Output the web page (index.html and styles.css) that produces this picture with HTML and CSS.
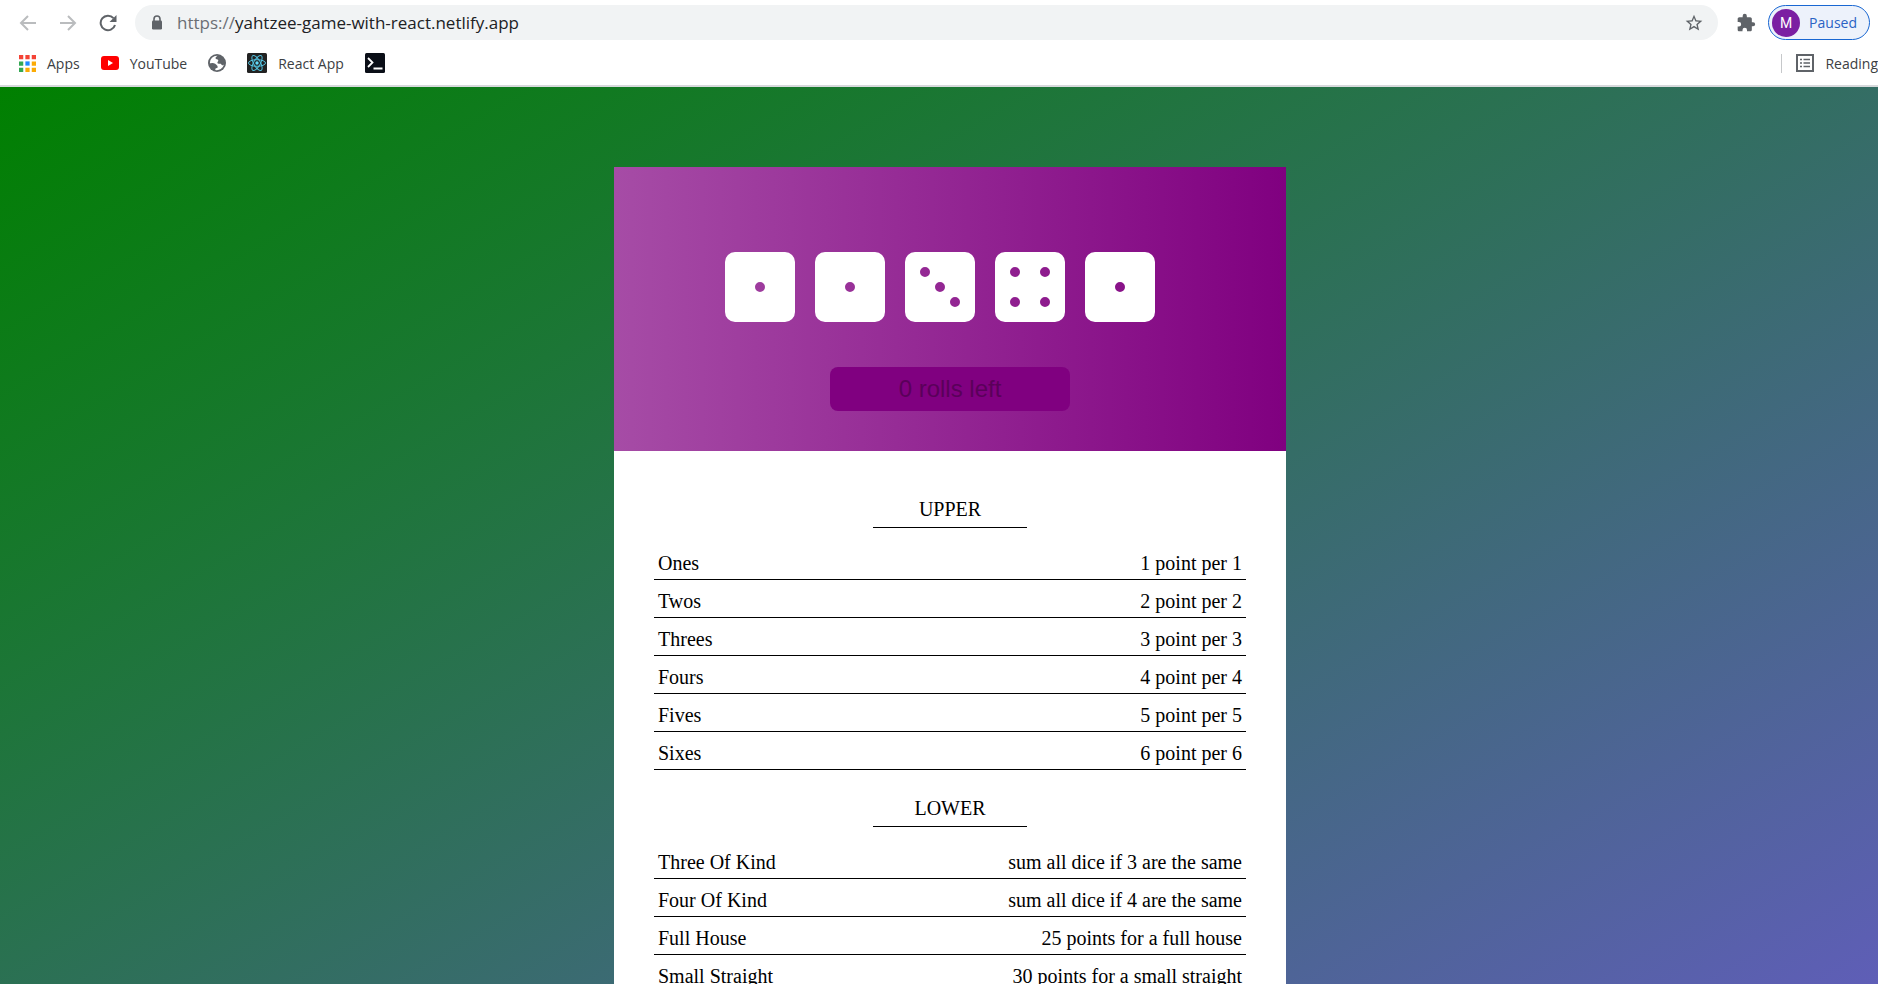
FILE: index.html
```html
<!DOCTYPE html>
<html lang="en">
<head>
<meta charset="utf-8">
<title>Yahtzee</title>
<link rel="stylesheet" href="styles.css">
</head>
<body>
<header class="browser">
  <div class="toolbar">
    <button class="nav-btn muted" aria-label="Back"><svg viewBox="0 0 18 18"><path d="M17 9H2M9 2 2 9l7 7"/></svg></button>
    <button class="nav-btn muted" aria-label="Forward"><svg viewBox="0 0 18 18"><path d="M1 9h15M9 2l7 7-7 7"/></svg></button>
    <button class="nav-btn" aria-label="Reload"><svg viewBox="0 0 18 18"><path d="M16 11A7.300 7.300 0 1 1 14.500 4.200"/><path class="solid" d="M17.500 1v7h-7z"/></svg></button>
    <div class="address">
      <svg class="lock" viewBox="0 0 12 15"><path d="M3 6V4a3 3 0 0 1 6 0v2" fill="none" stroke="#5f6368" stroke-width="1.600"/><rect x="1" y="5.500" width="10" height="9" rx="1.200" fill="#5f6368"/></svg>
      <a class="url" href="#"><span class="scheme">https://</span>yahtzee-game-with-react.netlify.app</a>
      <button class="star" aria-label="Bookmark this tab"><svg viewBox="0 0 24 24"><path d="M22 9.240l-7.190-.620L12 2 9.190 8.630 2 9.240l5.460 4.730L5.820 21 12 17.270 18.180 21l-1.630-7.030L22 9.240zM12 15.400l-3.760 2.270 1-4.280-3.320-2.880 4.380-.380L12 6.100l1.710 4.040 4.380.380-3.320 2.880 1 4.280L12 15.400z"/></svg></button>
    </div>
    <button class="ext" aria-label="Extensions"><svg viewBox="0 0 24 24"><path d="M20.500 11H19V7c0-1.100-.900-2-2-2h-4V3.500a2.500 2.500 0 0 0-5 0V5H4c-1.100 0-2 .900-2 2v3.800h1.500a2.700 2.700 0 0 1 0 5.400H2V20c0 1.100.900 2 2 2h3.800v-1.500a2.700 2.700 0 0 1 5.400 0V22H17c1.100 0 2-.900 2-2v-4h1.500a2.500 2.500 0 0 0 0-5z"/></svg></button>
    <button class="profile"><span class="avatar">M</span><span>Paused</span></button>
  </div>
  <nav class="bookmarks">
    <a href="#" class="mark"><svg class="apps" viewBox="0 0 16 16"><path fill="#f44336" d="M0 0h4v4H0zM6 0h4v4H6zM12 0h4v4h-4z"/><path fill="#34a853" d="M0 6h4v4H0zM0 12h4v4H0z"/><path fill="#1e88ff" d="M6 6h4v4H6z"/><path fill="#fbab05" d="M12 6h4v4h-4zM6 12h4v4H6zM12 12h4v4h-4z"/></svg>Apps</a>
    <a href="#" class="mark"><svg class="yt" viewBox="0 0 18 14"><rect width="18" height="14" rx="3" fill="#f00"/><path fill="#fff" d="M7 4v6l5-3z"/></svg>YouTube</a>
    <a href="#" class="mark" aria-label="Website"><svg class="globe" viewBox="0 0 18 18"><circle cx="9" cy="9" r="9" fill="#5f6368"/><path fill="#fff" d="M9.500 1.700C7.500 3 7 4 8 5c1 .700 2.200.300 2.300 1.400.100 1-.800 1-.900 2 0 1.200 1.200 1.400 2.800 1.300 1 0 1 .700 1.600 1.200.700.500 1.600.200 2.200-.300A7.300 7.300 0 0 1 7.300 16c-.100-1.200.300-1.700 1.500-1.900 1.200-.300 1-1.600.500-2.400-1-1.500-3-2.700-4.700-2.700-1.200 0-1.800.300-2.800.300A7.300 7.300 0 0 1 9.500 1.700z"/></svg></a>
    <a href="#" class="mark"><svg class="tile" viewBox="0 0 20 20"><rect width="20" height="20" rx="1.500" fill="#222"/><g fill="none" stroke="#53c1de" stroke-width="1"><ellipse cx="10" cy="10" rx="8.500" ry="3.300"/><ellipse cx="10" cy="10" rx="8.500" ry="3.300" transform="rotate(60 10 10)"/><ellipse cx="10" cy="10" rx="8.500" ry="3.300" transform="rotate(120 10 10)"/></g><circle cx="10" cy="10" r="1.700" fill="#61dafb"/></svg>React App</a>
    <a href="#" class="mark" aria-label="Terminal"><svg class="tile" viewBox="0 0 20 20"><rect width="20" height="20" rx="1.500" fill="#0a0e17"/><path d="M3 5l4.500 4.500L3 14M8.500 15.500h9" fill="none" stroke="#fff" stroke-width="1.800"/></svg></a>
    <a href="#" class="mark reading"><svg class="list" viewBox="0 0 18 18"><path d="M1 1h16v16H1z" fill="none" stroke="#5f6368" stroke-width="2"/><path d="M4 5.500h2M7.500 5.500H14M4 9h2M7.500 9H14M4 12.500h2M7.500 12.500H14" stroke="#5f6368" stroke-width="1.600"/></svg>Reading</a>
  </nav>
</header>
<main class="page">
  <section class="card">
    <div class="table-top">
      <div class="dice">
        <button class="die" aria-label="One"><svg viewBox="0 0 70 70"><path d="M10 0H60a10 10 0 0 1 10 10V60a10 10 0 0 1-10 10H10A10 10 0 0 1 0 60V10A10 10 0 0 1 10 0zM30 35a5 5 0 0 0 10 0a5 5 0 0 0-10 0z"/></svg></button>
        <button class="die" aria-label="One"><svg viewBox="0 0 70 70"><path d="M10 0H60a10 10 0 0 1 10 10V60a10 10 0 0 1-10 10H10A10 10 0 0 1 0 60V10A10 10 0 0 1 10 0zM30 35a5 5 0 0 0 10 0a5 5 0 0 0-10 0z"/></svg></button>
        <button class="die" aria-label="Three"><svg viewBox="0 0 70 70"><path d="M10 0H60a10 10 0 0 1 10 10V60a10 10 0 0 1-10 10H10A10 10 0 0 1 0 60V10A10 10 0 0 1 10 0zM15 20a5 5 0 0 0 10 0a5 5 0 0 0-10 0zM30 35a5 5 0 0 0 10 0a5 5 0 0 0-10 0zM45 50a5 5 0 0 0 10 0a5 5 0 0 0-10 0z"/></svg></button>
        <button class="die" aria-label="Four"><svg viewBox="0 0 70 70"><path d="M10 0H60a10 10 0 0 1 10 10V60a10 10 0 0 1-10 10H10A10 10 0 0 1 0 60V10A10 10 0 0 1 10 0zM15 20a5 5 0 0 0 10 0a5 5 0 0 0-10 0zM45 20a5 5 0 0 0 10 0a5 5 0 0 0-10 0zM15 50a5 5 0 0 0 10 0a5 5 0 0 0-10 0zM45 50a5 5 0 0 0 10 0a5 5 0 0 0-10 0z"/></svg></button>
        <button class="die" aria-label="One"><svg viewBox="0 0 70 70"><path d="M10 0H60a10 10 0 0 1 10 10V60a10 10 0 0 1-10 10H10A10 10 0 0 1 0 60V10A10 10 0 0 1 10 0zM30 35a5 5 0 0 0 10 0a5 5 0 0 0-10 0z"/></svg></button>
      </div>
      <button class="roll" disabled>0 rolls left</button>
    </div>
    <div class="scores">
      <h2>UPPER</h2>
      <table>
        <tr><td>Ones</td><td>1 point per 1</td></tr>
        <tr><td>Twos</td><td>2 point per 2</td></tr>
        <tr><td>Threes</td><td>3 point per 3</td></tr>
        <tr><td>Fours</td><td>4 point per 4</td></tr>
        <tr><td>Fives</td><td>5 point per 5</td></tr>
        <tr><td>Sixes</td><td>6 point per 6</td></tr>
      </table>
      <h2>LOWER</h2>
      <table>
        <tr><td>Three Of Kind</td><td>sum all dice if 3 are the same</td></tr>
        <tr><td>Four Of Kind</td><td>sum all dice if 4 are the same</td></tr>
        <tr><td>Full House</td><td>25 points for a full house</td></tr>
        <tr><td>Small Straight</td><td>30 points for a small straight</td></tr>
      </table>
    </div>
  </section>
</main>
</body>
</html>
```
FILE: styles.css
```css
* { box-sizing: border-box; }
html, body { height: 100%; }
body {
  margin: 0;
  display: flex;
  flex-direction: column;
  overflow: hidden;
  font-family: "Liberation Serif", serif;
  color: #000;
}
button { border: 0; padding: 0; background: none; font: inherit; }
a { color: inherit; text-decoration: none; }
svg { display: block; flex: none; }

.browser {
  flex: none;
  background: #fff;
  border-bottom: 2px solid #d7d9dc;
  font-family: "Open Sans", "Noto Sans", sans-serif;
  color: #3c4043;
}
.toolbar { display: flex; align-items: center; height: 45px; padding: 0 8px 0 19px; }
.nav-btn { width: 18px; height: 18px; margin-right: 22px; }
.nav-btn svg { width: 18px; height: 18px; fill: none; stroke: #5f6368; stroke-width: 2; }
.nav-btn .solid { fill: #5f6368; stroke: none; }
.nav-btn.muted svg { stroke: #babcbe; }
.address {
  flex: 1;
  display: flex;
  align-items: center;
  height: 35px;
  margin-left: -4px;
  padding: 0 14px 0 16px;
  border-radius: 18px;
  background: #f1f3f4;
}
.lock { width: 12px; height: 15px; margin-right: 14px; }
.url { flex: 1; font-size: 17px; color: #202124; }
.scheme { color: #6b6f74; }
.star svg { width: 20px; height: 20px; fill: #5f6368; }
.ext { margin: 0 12px 0 18px; }
.ext svg { width: 20px; height: 20px; fill: #5f6368; }
.profile {
  display: flex;
  align-items: center;
  gap: 9px;
  height: 35px;
  padding: 0 12px 0 3px;
  border: 1px solid #1967d2;
  border-radius: 18px;
  background: #edf2fb;
  color: #2a62c4;
  font-size: 14px;
}
.avatar {
  display: grid;
  place-items: center;
  width: 28px;
  height: 28px;
  border-radius: 50%;
  background: #7b1fa2;
  color: #fff;
  font-family: Roboto, sans-serif;
}
.bookmarks { display: flex; align-items: center; gap: 21px; height: 40px; padding: 0 0 4px 19px; font-size: 14px; }
.mark { display: flex; align-items: center; gap: 11px; white-space: nowrap; }
.apps { width: 17px; height: 17px; }
.yt { width: 18px; height: 14px; }
.globe { width: 18px; height: 18px; }
.tile { width: 20px; height: 20px; }
.list { width: 18px; height: 18px; }
.reading { margin-left: auto; padding-left: 14px; border-left: 1px solid #c6c8ca; }

.page {
  flex: 1;
  min-height: 0;
  padding: 80px 0 0 22px;
  overflow: hidden;
  background: linear-gradient(150deg, #008000, #6a5acd 112%);
}
.card { width: 36%; min-width: 672px; margin: 0 auto; background: #fff; }
.table-top {
  display: flex;
  flex-direction: column;
  align-items: center;
  gap: 45px;
  padding: 85px 0 40px;
  background: linear-gradient(to right, #a64ca6, #800080);
}
.dice { display: flex; gap: 20px; padding-right: 20px; }
.die svg { width: 70px; height: 70px; fill: #fff; }
.roll {
  width: 240px;
  height: 44px;
  border-radius: 8px;
  background: #800080;
  color: #5a005a;
  font-family: "Liberation Sans", Arial, sans-serif;
  font-size: 24px;
}
.scores { padding: 20px 40px; font-size: 20px; }
h2 {
  width: 154px;
  margin: 26px auto 14px;
  padding-bottom: 6px;
  border-bottom: 1px solid #000;
  font-size: 20px;
  font-weight: 400;
  line-height: 24px;
  text-align: center;
}
table { width: 100%; border-collapse: collapse; }
td { padding: 9px 4px 4px; line-height: 24px; border-bottom: 1px solid #000; }
td + td { text-align: right; }
```
